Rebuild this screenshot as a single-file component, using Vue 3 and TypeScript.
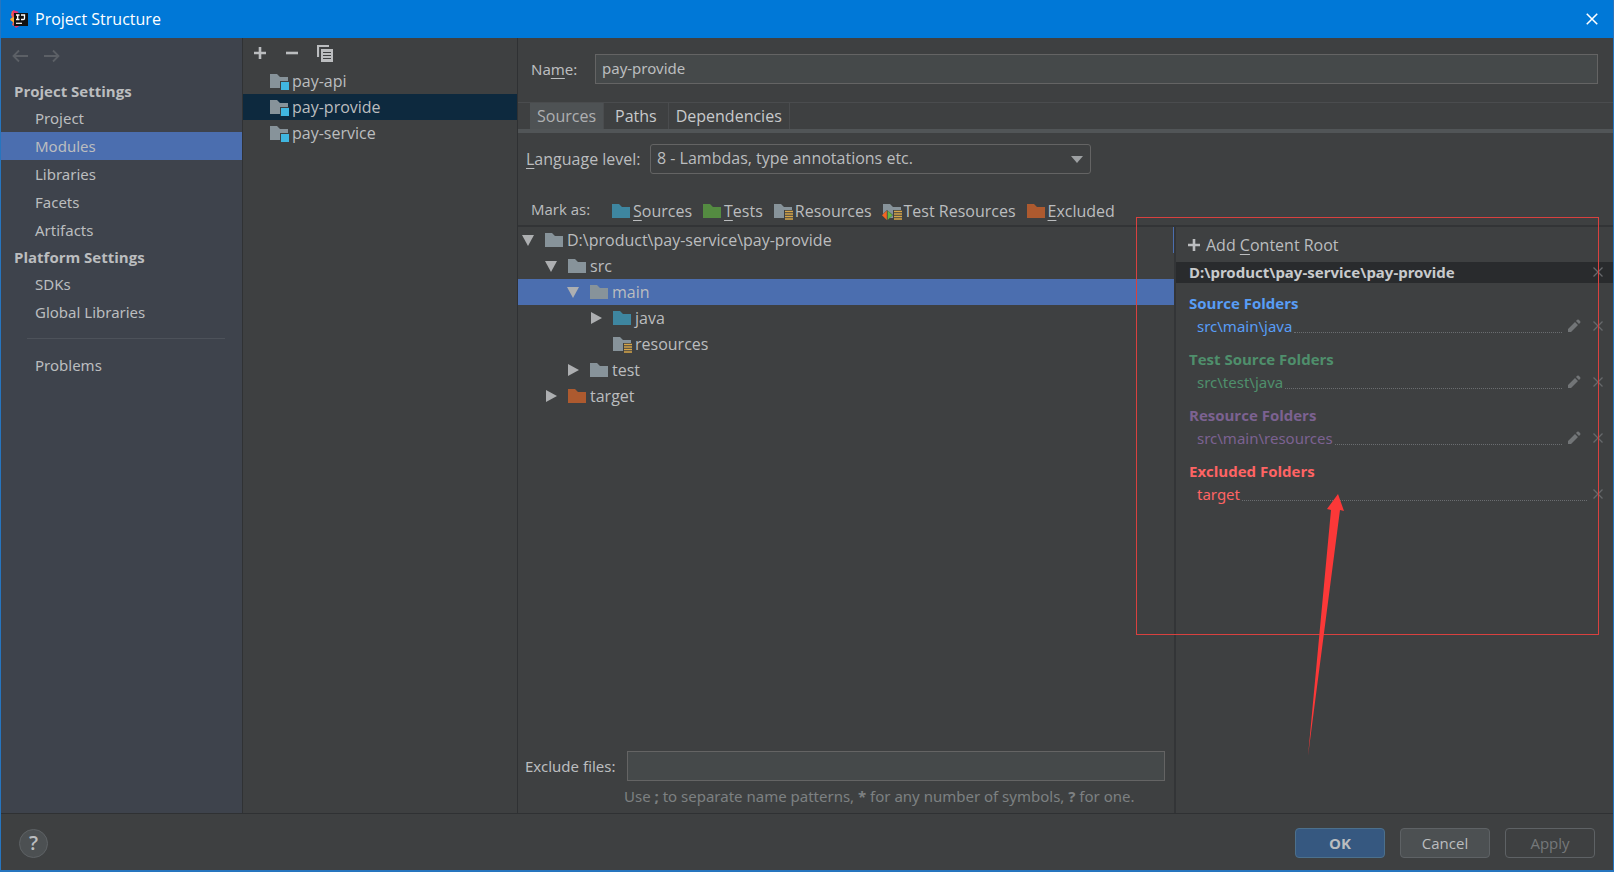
<script setup lang="ts">
import { ref } from 'vue'

type FolderKind = 'plain' | 'source' | 'test' | 'resource' | 'test-resource' | 'excluded' | 'module'
interface NavGroup { title: string; items: string[] }
interface TreeNode { label: string; depth: number; kind: FolderKind; state: 'open' | 'closed' | 'leaf' }
interface RootGroup { title: string; path: string; tone: string; editable: boolean }

const navGroups: NavGroup[] = [
  { title: 'Project Settings', items: ['Project', 'Modules', 'Libraries', 'Facets', 'Artifacts'] },
  { title: 'Platform Settings', items: ['SDKs', 'Global Libraries'] },
]
const activeNav = ref('Modules')

const modules = ['pay-api', 'pay-provide', 'pay-service']
const activeModule = ref('pay-provide')
const moduleName = ref('pay-provide')

const tabs = ['Sources', 'Paths', 'Dependencies']
const activeTab = ref('Sources')

const marks: { key: string; rest: string; kind: FolderKind }[] = [
  { key: 'S', rest: 'ources', kind: 'source' },
  { key: 'T', rest: 'ests', kind: 'test' },
  { key: '', rest: 'Resources', kind: 'resource' },
  { key: '', rest: 'Test Resources', kind: 'test-resource' },
  { key: 'E', rest: 'xcluded', kind: 'excluded' },
]

const tree: TreeNode[] = [
  { label: 'D:\\product\\pay-service\\pay-provide', depth: 0, kind: 'plain', state: 'open' },
  { label: 'src', depth: 1, kind: 'plain', state: 'open' },
  { label: 'main', depth: 2, kind: 'plain', state: 'open' },
  { label: 'java', depth: 3, kind: 'source', state: 'closed' },
  { label: 'resources', depth: 3, kind: 'resource', state: 'leaf' },
  { label: 'test', depth: 2, kind: 'plain', state: 'closed' },
  { label: 'target', depth: 1, kind: 'excluded', state: 'closed' },
]
const activeNode = ref('main')

const rootGroups: RootGroup[] = [
  { title: 'Source Folders', path: 'src\\main\\java', tone: 'blue', editable: true },
  { title: 'Test Source Folders', path: 'src\\test\\java', tone: 'green', editable: true },
  { title: 'Resource Folders', path: 'src\\main\\resources', tone: 'purple', editable: true },
  { title: 'Excluded Folders', path: 'target', tone: 'red', editable: false },
]
const excludePatterns = ref('')
</script>

<template>
  <div class="window">
    <svg class="defs" aria-hidden="true">
      <symbol id="i-folder" viewBox="0 0 20 18"><path d="M1 2h7l3 3h8v11H1z" fill="currentColor" /></symbol>
      <symbol id="i-lines" viewBox="0 0 20 18">
        <path d="M11 8h9v10h-9z" fill="#3e4041" />
        <path d="M12 9.5h8M12 12h8M12 14.5h8M12 17h8" stroke="#d6a548" stroke-width="1.4" />
      </symbol>
      <symbol id="i-square" viewBox="0 0 20 18">
        <path d="M11 9h9v9h-9z" fill="#3e4041" /><path d="M12 10h8v8h-8z" fill="#40b6e0" />
      </symbol>
      <symbol id="i-rhomb" viewBox="0 0 20 18">
        <path d="M0 13l5-5 6 5-6 5H0z" fill="#3e4041" />
        <path d="M4.800 8.500v9.500L0 13.300z" fill="#f26522" /><path d="M5.600 8.500v9.500l4.800-4.700z" fill="#62b543" />
      </symbol>
      <symbol id="i-close" viewBox="0 0 12 12"><path d="M1.500 1.500l9 9M10.500 1.500l-9 9" stroke="currentColor" stroke-width="1.300" /></symbol>
      <symbol id="i-plus" viewBox="0 0 14 14"><path d="M7 1v12M1 7h12" stroke="currentColor" stroke-width="2.600" /></symbol>
      <symbol id="i-pencil" viewBox="0 0 14 14">
        <path d="M1 10l7-7 3 3-7 7H1zM9 2l1.200-1.200q.8-.6 1.600 0l1.400 1.400q.6.800 0 1.600L12 5z" fill="currentColor" />
      </symbol>
    </svg>

    <header class="titlebar">
      <svg class="logo" viewBox="0 0 18 18" aria-hidden="true">
        <path d="M2 1l5 1-1 15-4-2 1-3-3-2 2-3-1-2z" fill="#f0604d" />
        <path d="M0 9l4-2v6z" fill="#f9b233" /><path d="M3 0l6 2-6 4z" fill="#e8336d" />
        <path d="M3 14l8 1-5 3z" fill="#e8336d" />
        <path d="M4 3h14v13H4z" fill="#111" />
        <path d="M6 5h3.500M7.700 5v4.500M6 9.500h3.500M11 5h3.500v3.300q0 1.200-1.200 1.200H11" fill="none" stroke="#fff" stroke-width="1.300" />
        <path d="M6 13.300h6" stroke="#fff" stroke-width="1.200" />
      </svg>
      <h1>Project Structure</h1>
      <button class="icon-btn win-close" aria-label="Close"><svg viewBox="0 0 12 12"><use href="#i-close" /></svg></button>
    </header>

    <div class="body">
      <nav class="sidebar" aria-label="Settings">
        <div class="history">
          <button class="icon-btn" aria-label="Back"><svg viewBox="0 0 16 14"><path d="M16 7H1.500M7 1.500L1.500 7 7 12.500" fill="none" stroke="currentColor" stroke-width="1.800" /></svg></button>
          <button class="icon-btn" aria-label="Forward"><svg viewBox="0 0 16 14"><path d="M0 7h14.500M9 1.500L14.500 7 9 12.500" fill="none" stroke="currentColor" stroke-width="1.800" /></svg></button>
        </div>
        <section v-for="g in navGroups" :key="g.title">
          <h2>{{ g.title }}</h2>
          <button v-for="item in g.items" :key="item" class="nav-item" :class="{ active: item === activeNav }" @click="activeNav = item">{{ item }}</button>
        </section>
        <hr />
        <button class="nav-item">Problems</button>
      </nav>

      <aside class="modules">
        <div class="tools">
          <button class="icon-btn" aria-label="Add"><svg viewBox="0 0 14 14"><use href="#i-plus" /></svg></button>
          <button class="icon-btn" aria-label="Remove"><svg viewBox="0 0 14 14"><path d="M1 7h12" stroke="currentColor" stroke-width="2.600" /></svg></button>
          <button class="icon-btn copy" aria-label="Copy"><svg viewBox="0 0 16 17">
            <path d="M1 12V1h11" fill="none" stroke="currentColor" stroke-width="2.200" />
            <path d="M4 4h12v13H4z" fill="currentColor" />
            <path d="M6 7.500h8M6 10.500h8M6 13.500h8" stroke="#3e4041" stroke-width="1.200" />
          </svg></button>
        </div>
        <button v-for="m in modules" :key="m" class="module" :class="{ active: m === activeModule }" @click="activeModule = m">
          <svg class="folder module-icon" viewBox="0 0 20 18"><use href="#i-folder" /><use href="#i-square" /></svg>{{ m }}
        </button>
      </aside>

      <main class="editor">
        <div class="name-row">
          <label for="name">Na<u>m</u>e:</label>
          <input id="name" v-model="moduleName" class="field" type="text" />
        </div>
        <div class="tabs" role="tablist">
          <button v-for="t in tabs" :key="t" role="tab" :aria-selected="t === activeTab" :class="{ active: t === activeTab }" @click="activeTab = t">{{ t }}</button>
        </div>
        <div class="level-row">
          <label for="level"><u>L</u>anguage level:</label>
          <div class="select-wrap">
            <select id="level"><option>8 - Lambdas, type annotations etc.</option></select>
            <svg viewBox="0 0 12 7" aria-hidden="true"><path d="M0 0h12L6 7z" fill="#9da0a2" /></svg>
          </div>
        </div>
        <div class="marks">
          <span class="marks-label">Mark as:</span>
          <button v-for="m in marks" :key="m.kind">
            <svg class="folder" :class="m.kind" viewBox="0 0 20 18">
              <use href="#i-folder" />
              <use v-if="m.kind === 'resource' || m.kind === 'test-resource'" href="#i-lines" />
              <use v-if="m.kind === 'test-resource'" href="#i-rhomb" />
            </svg><span><u v-if="m.key">{{ m.key }}</u>{{ m.rest }}</span>
          </button>
        </div>

        <div class="split">
          <section class="tree-pane">
            <div class="tree" role="tree" aria-label="Content">
              <div v-for="n in tree" :key="n.label" role="treeitem" class="node" :class="['depth-' + n.depth, { active: n.label === activeNode }]" @click="activeNode = n.label">
                <svg class="twisty" viewBox="0 0 12 12" aria-hidden="true">
                  <path v-if="n.state === 'open'" d="M0 1h12L6 12z" fill="currentColor" />
                  <path v-if="n.state === 'closed'" d="M1 0v12l11-6z" fill="currentColor" />
                </svg>
                <svg class="folder" :class="n.kind" viewBox="0 0 20 18"><use href="#i-folder" /><use v-if="n.kind === 'resource'" href="#i-lines" /></svg>
                <span>{{ n.label }}</span>
              </div>
            </div>
            <div class="exclude">
              <label for="exclude">Exclude files:</label>
              <input id="exclude" v-model="excludePatterns" class="field" type="text" />
              <p>Use <b>;</b> to separate name patterns, <b>*</b> for any number of symbols, <b>?</b> for one.</p>
            </div>
          </section>

          <section class="roots">
            <button class="add-root"><svg viewBox="0 0 14 14"><use href="#i-plus" /></svg><span>Add <u>C</u>ontent Root</span></button>
            <div class="root-head">
              <strong>D:\product\pay-service\pay-provide</strong>
              <button class="icon-btn remove" aria-label="Remove content root"><svg viewBox="0 0 12 12"><use href="#i-close" /></svg></button>
            </div>
            <div v-for="g in rootGroups" :key="g.title" class="root-group" :class="g.tone">
              <h3>{{ g.title }}</h3>
              <div class="root-line">
                <a href="#">{{ g.path }}</a><i class="dots"></i>
                <button v-if="g.editable" class="icon-btn edit" aria-label="Edit properties"><svg viewBox="0 0 14 14"><use href="#i-pencil" /></svg></button>
                <button class="icon-btn remove" aria-label="Unmark"><svg viewBox="0 0 12 12"><use href="#i-close" /></svg></button>
              </div>
            </div>
            <div class="callout" aria-hidden="true"></div>
            <svg class="arrow" viewBox="0 0 40 262" aria-hidden="true"><path d="M31 0l6 17-4-1L1 262 24 16l-4-1z" fill="#fb3838" /></svg>
          </section>
        </div>
      </main>
    </div>

    <footer class="footer">
      <button class="help" aria-label="Help">?</button>
      <button class="btn primary">OK</button>
      <button class="btn">Cancel</button>
      <button class="btn" disabled>Apply</button>
    </footer>
  </div>
</template>

<style>
body { background: #3e4041; }
</style>

<style scoped>
* { box-sizing: border-box; }
.window {
  display: flex; flex-direction: column; min-height: 100vh;
  border: solid #2675bf; border-width: 0 1px 2px;
  background: #3e4041; color: #bbbdbf;
  font: 16px/26px "Open Sans", "Noto Sans", sans-serif;
}
.defs { position: absolute; width: 0; height: 0; }
button, input, select { font: inherit; color: inherit; }
button { padding: 0; border: 0; background: none; text-align: left; white-space: nowrap; }
h1, h2, h3, p { margin: 0; font-size: inherit; }
svg { display: block; flex: none; }
u { text-underline-offset: 3px; }
.icon-btn svg { width: 14px; height: 14px; }

/* Compact text shared by the secondary panels */
.sidebar, .name-row, .exclude, .root-head, .root-line { font-family: "Noto Sans", "Open Sans", sans-serif; font-size: 15px; }

.titlebar { display: flex; align-items: center; height: 38px; padding: 0 14px 0 9px; background: #0078d7; color: #fff; }
.logo { width: 18px; height: 18px; }
.titlebar h1 { flex: 1; margin-left: 7px; font-weight: 400; }

.body { display: flex; flex: 1; }
.sidebar { width: 242px; padding-top: 10px; border-right: 1px solid #303234; background: #3e434c; }
.history { display: flex; gap: 16px; height: 30px; padding-left: 11px; color: #5c6066; }
.history button { height: 16px; }
.history svg { width: 16px; height: 14px; }
.sidebar h2 { padding-left: 13px; font-family: "Open Sans", "Noto Sans", sans-serif; line-height: 26px; }
.nav-item { display: block; width: 100%; height: 28px; padding-left: 34px; line-height: 28px; }
.nav-item.active { background: #4b6eaf; }
.sidebar hr { margin: 12px 17px 12px 26px; border: 0; border-top: 1px solid #4d525a; }

.modules { width: 275px; border-right: 1px solid #2f3133; }
.tools { display: flex; align-items: center; gap: 18px; height: 30px; padding-left: 10px; }
.tools .copy svg { width: 16px; height: 17px; }
.module { display: flex; align-items: center; width: 100%; height: 26px; padding-left: 26px; gap: 3px; }
.module.active { background: #0d293e; }
.folder { width: 20px; height: 18px; color: #87939a; }
.folder.source { color: #3e86a0; }
.folder.test { color: #548b41; }
.folder.excluded { color: #ad5a2f; }

.editor { display: flex; flex: 1; flex-direction: column; min-width: 0; }
.field { height: 30px; min-width: 0; padding: 0 6px 2px; border: 1px solid #646464; background: #45494a; outline: 0; }
.name-row { display: flex; align-items: center; margin: 16px 15px 18px 13px; }
.name-row label { width: 64px; }
.name-row .field { flex: 1; }
.tabs { display: flex; height: 31px; padding-left: 12px; border-top: 1px solid #4a4c4e; border-bottom: 4px solid #515557; }
.tabs button { padding: 0 7px; border-right: 1px solid #4a4c4e; color: #c8cacc; }
.tabs button:nth-child(2) { padding: 0 11px; }
.tabs .active { background: #4e5254; color: #aeb0b2; }
.level-row { display: flex; align-items: center; margin: 11px 0 0 8px; }
.level-row label { width: 124px; }
.select-wrap { position: relative; width: 441px; }
select { width: 100%; height: 30px; padding: 0 6px 2px; border: 1px solid #646464; border-radius: 3px; appearance: none; background: #3e4041; }
.select-wrap svg { position: absolute; top: 12px; right: 8px; width: 12px; height: 7px; pointer-events: none; }
.marks { display: flex; height: 51px; padding: 24px 0 0 13px; }
.marks-label { width: 80px; margin-top: -2px; font-size: 15px; }
.marks button { display: flex; align-items: center; gap: 2px; height: 26px; margin-right: 10px; }

.split { display: flex; flex: 1; border-top: 2px solid #323436; }
.tree-pane { position: relative; display: flex; flex: 1; flex-direction: column; min-width: 0; }
.tree-pane::after { content: ""; position: absolute; top: 0; right: 0; width: 1px; height: 26px; background: #4b6eaf; }
.tree { flex: 1; }
.node { display: flex; align-items: center; height: 26px; gap: 3px; padding-left: 4px; color: #bbbdbf; }
.twisty { width: 12px; height: 12px; margin-right: 7px; color: #adafb1; }
.depth-1 { padding-left: 27px; }
.depth-2 { padding-left: 49px; }
.depth-3 { padding-left: 72px; }
.node.active { background: #4b6eaf; }
.exclude { display: grid; grid-template-columns: 102px 1fr; row-gap: 2px; align-items: center; padding: 0 9px 4px 7px; }
.exclude p { grid-column: 2; margin-left: -3px; color: #7d8082; }

.roots { position: relative; width: 439px; border-left: 2px solid #333537; }
.add-root { display: flex; align-items: center; gap: 5px; height: 35px; padding-left: 11px; }
.add-root svg { width: 14px; height: 14px; }
.root-head { display: flex; align-items: center; justify-content: space-between; height: 21px; padding: 0 9px 1px 13px; background: #292b2d; color: #c8cacc; }
.remove { color: #66686b; }
.remove svg { width: 12px; height: 12px; }
.root-group { height: 56px; padding: 8px 9px 0 13px; }
.root-group h3 { font-size: 15px; line-height: 24px; }
.root-line { display: flex; align-items: center; height: 22px; padding-left: 8px; }
.root-line a { color: inherit; text-decoration: none; }
.dots { flex: 1; height: 14px; margin: 0 5px 0 2px; border-bottom: 1px dotted #6a6d70; }
.root-line .edit + .remove { margin-left: 11px; }
.edit { color: #727577; }
.blue { color: #589df6; }
.green { color: #4f8f6c; }
.purple { color: #7c6291; }
.red { color: #ff6464; }

/* Annotations laid over the content roots */
.callout { position: absolute; top: -10px; left: -40px; right: 14px; height: 418px; border: 1px solid #d9413f; pointer-events: none; }
.arrow { position: absolute; top: 267px; left: 131px; width: 40px; height: 262px; pointer-events: none; }

.footer { display: flex; align-items: center; gap: 15px; height: 57px; padding: 2px 18px 0; border-top: 1px solid #2f3133; font-size: 15px; }
.help { width: 29px; height: 29px; margin-right: auto; border: 1px solid #5e6265; border-radius: 50%; background: #4c5052; font-size: 20px; font-weight: 600; line-height: 26px; text-align: center; }
.btn { width: 90px; height: 30px; border: 1px solid #5e6265; border-radius: 4px; background: #4c5052; text-align: center; }
.btn.primary { border-color: #4c708c; background: #365880; font-weight: 700; }
.btn:disabled { background: none; color: #75787a; }
</style>
